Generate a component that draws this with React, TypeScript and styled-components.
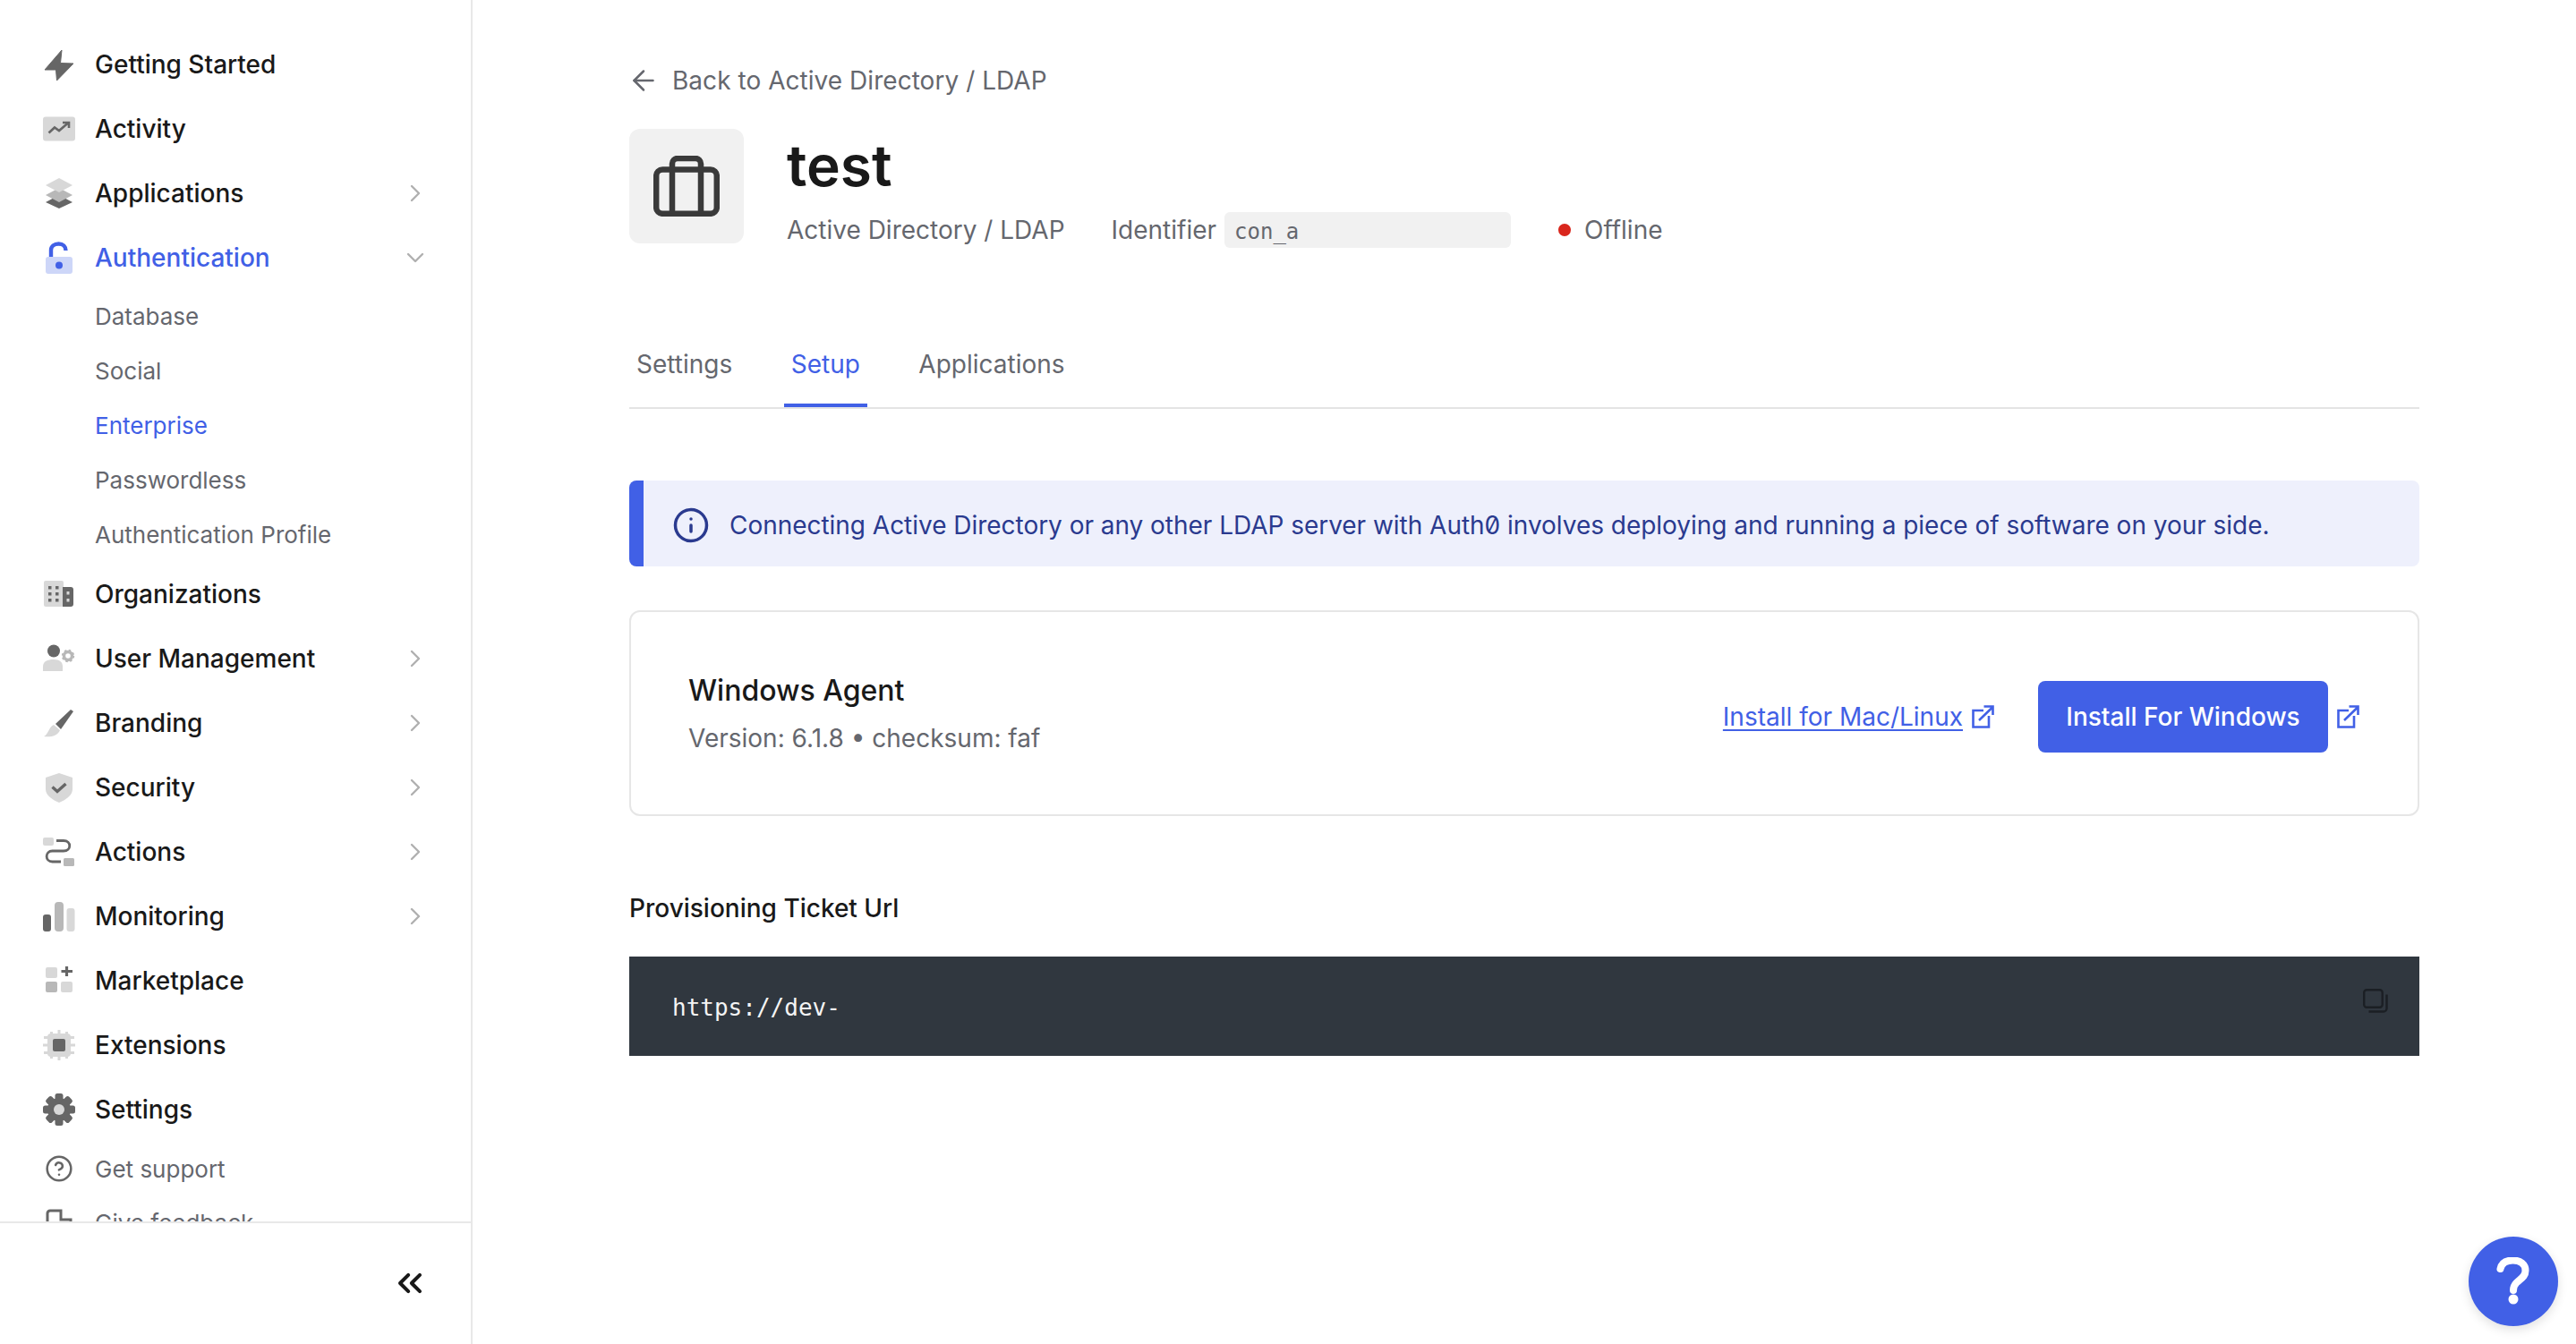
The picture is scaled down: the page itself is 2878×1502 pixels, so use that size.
import React from "react";
import styled, { createGlobalStyle } from "styled-components";
import { ArrowLeft, ChevronRight, ChevronDown, ChevronsLeft, CircleHelp, Info } from "lucide-react";

const D = "#666666";
const M = "#b8b8b8";
const L = "#d8d8d8";
const BLUE = "#4160e6";

const Global = createGlobalStyle`
  html, body { margin: 0; padding: 0; background: #fff; }
  body { font-family: Inter, "Noto Sans", "Liberation Sans", sans-serif; color: #191919; }
  * { box-sizing: border-box; }
`;

const Shell = styled.div`
  display: flex;
  width: 100%;
  height: 100vh;
  overflow: hidden;
`;

const Sidebar = styled.aside`
  flex: 0 0 528px;
  display: flex;
  flex-direction: column;
  border-right: 2px solid #e8e8e8;
`;

const Nav = styled.nav`
  flex: 1;
  min-height: 0;
  overflow: hidden;
  padding-top: 36px;
`;

const NavRow = styled.a<{ $active?: boolean }>`
  display: flex;
  align-items: center;
  height: 72px;
  padding-left: 48px;
  padding-right: 46px;
  font-size: 28px;
  font-weight: 500;
  color: ${(p) => (p.$active ? BLUE : "#191919")};
`;

const IconSlot = styled.span`
  flex: 0 0 36px;
  width: 36px;
  height: 36px;
  margin-right: 22px;
  display: flex;
  align-items: center;
  justify-content: center;
`;

const RowLabel = styled.span`
  flex: 1;
  white-space: nowrap;
`;

const Caret = styled.span`
  display: flex;
  color: #b0b0b0;
`;

const SubList = styled.div`
  display: flex;
  flex-direction: column;
  margin-top: -1px;
`;

const SubRow = styled.a<{ $active?: boolean }>`
  height: 61px;
  display: flex;
  align-items: center;
  padding-left: 106px;
  font-size: 26px;
  color: ${(p) => (p.$active ? BLUE : "#65676e")};
`;

const HelpRow = styled.a`
  display: flex;
  align-items: center;
  height: 60px;
  padding-left: 48px;
  font-size: 26px;
  color: #65676e;
`;

const SideFoot = styled.div`
  flex: 0 0 137px;
  border-top: 2px solid #e8e8e8;
  display: flex;
  align-items: center;
  justify-content: flex-end;
  padding-right: 46px;
  padding-bottom: 1px;
  color: #191919;
`;

const Main = styled.main`
  flex: 1;
  min-width: 0;
  display: flex;
  justify-content: center;
`;

const Content = styled.div`
  width: 2000px;
  padding-top: 70px;
`;

const BackLink = styled.a`
  display: flex;
  align-items: center;
  height: 40px;
  gap: 14px;
  font-size: 28px;
  letter-spacing: 0.04px;
  color: #65676e;
  svg { margin-left: -2px; }
`;

const Header = styled.header`
  display: flex;
  gap: 48px;
  margin-top: 34px;
`;

const BigIcon = styled.div`
  flex: 0 0 128px;
  height: 128px;
  background: #f1f1f1;
  border-radius: 12px;
  display: flex;
  align-items: center;
  justify-content: center;
`;

const HeaderText = styled.div`
  display: flex;
  flex-direction: column;
`;

const Title = styled.h1`
  margin: 1px 0 0;
  height: 80px;
  line-height: 80px;
  font-size: 64px;
  font-weight: 600;
  color: #191919;
`;

const MetaRow = styled.div`
  display: flex;
  align-items: center;
  margin-top: 12px;
  height: 40px;
  font-size: 28px;
  color: #65676e;
`;

const MetaType = styled.span`
  margin-right: 52px;
`;

const MetaKey = styled.span`
  margin-right: 9px;
`;

const IdBox = styled.code`
  width: 320px;
  height: 40px;
  border-radius: 6px;
  background: #f1f1f1;
  padding: 3px 11px 0;
  display: flex;
  align-items: center;
  font-family: "DejaVu Sans Mono", "Liberation Mono", monospace;
  font-size: 24px;
  color: #65676e;
`;

const StatusDot = styled.span`
  width: 14px;
  height: 14px;
  border-radius: 50%;
  background: #d9261c;
  margin-left: 53px;
  margin-right: 15px;
`;

const Tabs = styled.div`
  display: flex;
  gap: 49.5px;
  height: 98px;
  margin-top: 82px;
  border-bottom: 2px solid #e4e4e4;
`;

const Tab = styled.a<{ $active?: boolean }>`
  height: 96px;
  padding: 4px 8px 0;
  display: flex;
  align-items: center;
  font-size: 28px;
  color: ${(p) => (p.$active ? BLUE : "#65676e")};
  border-bottom: 4px solid ${(p) => (p.$active ? BLUE : "transparent")};
`;

const Banner = styled.div`
  margin-top: 80px;
  height: 96px;
  border-radius: 8px;
  background: #eef0fc;
  border-left: 16px solid ${BLUE};
  display: flex;
  align-items: center;
  padding: 3px 0 0 32px;
  gap: 22px;
  font-size: 28px;
  letter-spacing: -0.03px;
  color: #2a3a8f;
  font-feature-settings: "zero";
`;

const Card = styled.section`
  margin-top: 49px;
  height: 230px;
  border: 2px solid #e6e6e6;
  border-radius: 12px;
  padding: 3px 65px 0 64px;
  display: flex;
  align-items: center;
  justify-content: space-between;
`;

const CardText = styled.div`
  display: flex;
  flex-direction: column;
  gap: 13px;
`;

const CardTitle = styled.div`
  font-size: 32px;
  line-height: 40px;
  font-weight: 500;
  color: #191919;
`;

const CardMeta = styled.div`
  width: 393px;
  overflow: hidden;
  white-space: nowrap;
  font-size: 28px;
  line-height: 40px;
  color: #65676e;
`;

const Actions = styled.div`
  display: flex;
  align-items: center;
  margin-top: 5px;
`;

const InstallLink = styled.a`
  font-size: 28px;
  color: ${BLUE};
  text-decoration: underline;
  text-underline-offset: 4px;
  text-decoration-thickness: 2px;
  margin-right: 10px;
`;

const InstallButton = styled.button`
  width: 324px;
  height: 80px;
  margin-left: 49px;
  margin-right: 10px;
  border: 0;
  border-radius: 8px;
  background: ${BLUE};
  color: #fff;
  font-family: inherit;
  font-size: 28px;
  font-weight: 500;
`;

const CodeHeading = styled.h2`
  margin: 83px 0 0;
  font-size: 28px;
  line-height: 40px;
  font-weight: 500;
  color: #191919;
`;

const CodeBlock = styled.div`
  position: relative;
  margin-top: 34px;
  height: 111px;
  background: #30373f;
  display: flex;
  align-items: center;
  padding: 3px 0 0 48px;
  font-family: "DejaVu Sans Mono", "Liberation Mono", monospace;
  font-size: 26px;
  color: #f4f4f4;
`;

const CopyIcon = styled.span`
  position: absolute;
  top: 36px;
  right: 35px;
  display: flex;
`;

const Fab = styled.button`
  position: fixed;
  right: 20px;
  bottom: 20px;
  width: 100px;
  height: 100px;
  border: 0;
  padding: 0;
  border-radius: 50%;
  background: ${BLUE};
  box-shadow: 0 4px 12px rgba(0, 0, 0, 0.12);
  display: flex;
  align-items: center;
  justify-content: center;
`;

const S = ({ children }: { children: React.ReactNode }) => (
  <svg width="36" height="36" viewBox="0 0 36 36" fill="none">{children}</svg>
);

const Bolt = () => (
  <S>
    <path d="M21 3 L2 25 L14.5 25 L15.5 37 L34 18 L19.5 17.5 Z" transform="translate(0 -1)" fill={D} stroke={D} strokeWidth="1" strokeLinejoin="round" />
  </S>
);
const Activity = () => (
  <S>
    <rect x="0" y="4.5" width="36" height="27" rx="3" fill={L} />
    <path d="M6.500 22.500 L13 16.500 L18 20 L28 11.500 M22 11 L29 11 L29 17" stroke={D} strokeWidth="2.600" />
  </S>
);
const Layers = () => (
  <S>
    <path d="M18 23 L33 31 L18 38 L3 31 Z" transform="translate(0 -3)" fill={D} />
    <path d="M18 13 L33 21 L18 29 L3 21 Z" transform="translate(0 -1)" fill={M} />
    <path d="M18 1 L33 9 L18 17 L3 9 Z" fill={L} />
  </S>
);
const Lock = () => (
  <S>
    <rect x="3" y="17" width="30" height="19" rx="3" fill="#cdd6f8" />
    <path d="M9 17 V9.500 C9 5.500 12.500 2.500 17.500 2.500 C22.500 2.500 25.500 5.500 25.500 10" stroke={BLUE} strokeWidth="4.400" />
    <circle cx="18" cy="26.500" r="4" fill={BLUE} />
  </S>
);
const Building = () => (
  <S>
    <rect x="1" y="3" width="22" height="29" rx="2" fill={L} />
    <path d="M22 10 H31 a3 3 0 0 1 3 3 V29 a3 3 0 0 1 -3 3 H22 Z" fill={D} />
    <g fill={D}>
      <rect x="6" y="9" width="3.500" height="3.500" /><rect x="14" y="9" width="3.500" height="3.500" />
      <rect x="6" y="16" width="3.500" height="3.500" /><rect x="14" y="16" width="3.500" height="3.500" />
      <rect x="6" y="23" width="3.500" height="3.500" /><rect x="14" y="23" width="3.500" height="3.500" />
    </g>
    <rect x="26.500" y="15" width="3" height="3.500" fill={L} />
    <rect x="26.500" y="23" width="3" height="3.500" fill={L} />
  </S>
);
const Users = () => (
  <S>
    <circle cx="12" cy="9.500" r="7" fill={D} />
    <path d="M0 32 V27 C0 21 5 19 12 19 C19 19 22 22 22 27 V32 Z" fill={L} />
    <circle cx="28" cy="15" r="4.500" stroke={M} strokeWidth="3.400" />
    <circle cx="28" cy="15" r="6.200" stroke={M} strokeWidth="2" strokeDasharray="2.500 2.370" />
  </S>
);
const Brush = () => (
  <S>
    <path d="M14 19 L31 3 L34 5 L20 25 Z" fill={D} />
    <path d="M12 20 L19 26 C16 33 8 34 1 33 C6 31 6 23 12 20 Z" fill={L} />
  </S>
);
const Shield = () => (
  <S>
    <path d="M18 2 L33 7 V20 C33 27 25 32 18 35 C11 32 3 27 3 20 V7 Z" fill={L} />
    <path d="M10.500 17.500 L16 22.500 L25.500 14" stroke={D} strokeWidth="3.400" />
  </S>
);
const Flow = () => (
  <S>
    <rect x="0" y="2" width="12" height="9" rx="2" fill={L} />
    <rect x="22" y="25" width="12" height="9" rx="1.500" fill={M} transform="translate(1 0)" />
    <path d="M15 5.500 H23 C32 5.500 32 17 23 17 H10.500 C2 17 2 29 10.500 29 H20" stroke={D} strokeWidth="2.800" />
  </S>
);
const Bars = () => (
  <S>
    <rect x="0" y="16" width="9" height="19" rx="3" fill={D} />
    <rect x="13" y="2" width="10" height="33" rx="4" fill={M} />
    <rect x="26.500" y="9" width="9" height="26" rx="3" fill={L} />
  </S>
);
const Market = () => (
  <S>
    <rect x="3" y="3" width="13" height="12" rx="2" fill={L} />
    <rect x="3" y="19" width="13" height="12" rx="2" fill={M} />
    <rect x="20" y="19" width="13" height="12" rx="2" fill={L} />
    <path d="M26.500 2 V13 M20.500 7.500 H33" stroke={D} strokeWidth="3.200" />
  </S>
);
const Chip = () => (
  <S>
    <path d="M9.500 3 V33 M18 1 V35 M26.500 3 V33 M1 9.500 H35 M0 18 H36 M1 26.500 H35" stroke={L} strokeWidth="3" />
    <rect x="5" y="5" width="26" height="26" rx="4" fill={L} />
    <rect x="11" y="11" width="14" height="14" rx="2" fill={D} />
  </S>
);
const Gear = () => (
  <S>
    <circle cx="18" cy="18" r="13" fill={D} />
    {[0, 45, 90, 135].map((a) => (
      <rect key={a} x="13.500" y="0" width="9" height="36" rx="2.500" fill={D} transform={`rotate(${a} 18 18)`} />
    ))}
    <circle cx="18" cy="18" r="6" fill={L} />
  </S>
);
const Feedback = () => (
  <S>
    <path d="M5 30 V8 a3 3 0 0 1 3 -3 H20 V15 H31 V30" stroke={D} strokeWidth="3" />
  </S>
);
const Briefcase = () => (
  <svg width="74" height="68" viewBox="0 0 74 68" fill="none" stroke="#3a3a3a" strokeWidth="6.500">
    <rect x="3.200" y="15.500" width="67.600" height="49.300" rx="7" />
    <path d="M21 15.500 V9 a6 6 0 0 1 6 -6 H47 a6 6 0 0 1 6 6 V15.500 M21 15.500 V64.800 M53 15.500 V64.800" />
  </svg>
);
const External = () => (
  <svg width="25" height="26" viewBox="0 0 25 26" fill="none" stroke={BLUE} strokeWidth="2.600">
    <path d="M13 6 H1.500 V24.500 H19 V12" />
    <path d="M8 17 L23 2.500 M13.500 1.500 H23.500 V11" />
  </svg>
);
const Copy = () => (
  <svg width="28" height="27" viewBox="0 0 28 27" fill="none" stroke="#1b1f24" strokeWidth="2.400">
    <rect x="1.200" y="1.200" width="20.500" height="19.500" rx="3" />
    <path d="M26.500 6.500 V22 a3.500 3.500 0 0 1 -3.500 3.500 H6.500" />
  </svg>
);
const Question = () => (
  <svg width="40" height="54" viewBox="0 0 40 54" fill="none">
    <path d="M5.500 13 C7 6 12 3.500 19.500 3.500 C28 3.500 33.500 8 33.500 15 C33.500 22 28 24 23.500 28.500 C21 31 20 33 20 37" stroke="#fff" strokeWidth="8" strokeLinecap="round" />
    <circle cx="20" cy="47" r="5.500" fill="#fff" />
  </svg>
);

type Item = { label: string; icon: React.ComponentType; caret?: boolean };

const top: Item[] = [
  { label: "Getting Started", icon: Bolt },
  { label: "Activity", icon: Activity },
  { label: "Applications", icon: Layers, caret: true },
];
const rest: Item[] = [
  { label: "Organizations", icon: Building },
  { label: "User Management", icon: Users, caret: true },
  { label: "Branding", icon: Brush, caret: true },
  { label: "Security", icon: Shield, caret: true },
  { label: "Actions", icon: Flow, caret: true },
  { label: "Monitoring", icon: Bars, caret: true },
  { label: "Marketplace", icon: Market },
  { label: "Extensions", icon: Chip },
  { label: "Settings", icon: Gear },
];
const subs = ["Database", "Social", "Enterprise", "Passwordless", "Authentication Profile"];

const Row = ({ item }: { item: Item }) => {
  const I = item.icon;
  return (
    <NavRow>
      <IconSlot><I /></IconSlot>
      <RowLabel>{item.label}</RowLabel>
      {item.caret && <Caret><ChevronRight size={32} strokeWidth={1.8} /></Caret>}
    </NavRow>
  );
};

export default function App() {
  return (
    <Shell>
      <Global />
      <Sidebar>
        <Nav>
          {top.map((i) => <Row key={i.label} item={i} />)}
          <NavRow $active>
            <IconSlot><Lock /></IconSlot>
            <RowLabel>Authentication</RowLabel>
            <Caret><ChevronDown size={32} strokeWidth={1.8} /></Caret>
          </NavRow>
          <SubList>
            {subs.map((s) => <SubRow key={s} $active={s === "Enterprise"}>{s}</SubRow>)}
          </SubList>
          {rest.map((i) => <Row key={i.label} item={i} />)}
          <HelpRow>
            <IconSlot><CircleHelp size={32} strokeWidth={1.9} color={D} /></IconSlot>
            Get support
          </HelpRow>
          <HelpRow>
            <IconSlot><Feedback /></IconSlot>
            Give feedback
          </HelpRow>
        </Nav>
        <SideFoot><ChevronsLeft size={44} strokeWidth={2.2} /></SideFoot>
      </Sidebar>
      <Main>
        <Content>
          <BackLink><ArrowLeft size={36} strokeWidth={1.7} />Back to Active Directory / LDAP</BackLink>
          <Header>
            <BigIcon><Briefcase /></BigIcon>
            <HeaderText>
              <Title>test</Title>
              <MetaRow>
                <MetaType>Active Directory / LDAP</MetaType>
                <MetaKey>Identifier</MetaKey>
                <IdBox>con_a</IdBox>
                <StatusDot />
                Offline
              </MetaRow>
            </HeaderText>
          </Header>
          <Tabs>
            <Tab>Settings</Tab>
            <Tab $active>Setup</Tab>
            <Tab>Applications</Tab>
          </Tabs>
          <Banner>
            <Info size={42} strokeWidth={2} />
            Connecting Active Directory or any other LDAP server with Auth0 involves deploying and running a piece of software on your side.
          </Banner>
          <Card>
            <CardText>
              <CardTitle>Windows Agent</CardTitle>
              <CardMeta>Version: 6.1.8 • checksum: faf2c1d7</CardMeta>
            </CardText>
            <Actions>
              <InstallLink>Install for Mac/Linux</InstallLink>
              <External />
              <InstallButton>Install For Windows</InstallButton>
              <External />
            </Actions>
          </Card>
          <CodeHeading>Provisioning Ticket Url</CodeHeading>
          <CodeBlock>
            https://dev-
            <CopyIcon><Copy /></CopyIcon>
          </CodeBlock>
        </Content>
      </Main>
      <Fab aria-label="Help"><Question /></Fab>
    </Shell>
  );
}
